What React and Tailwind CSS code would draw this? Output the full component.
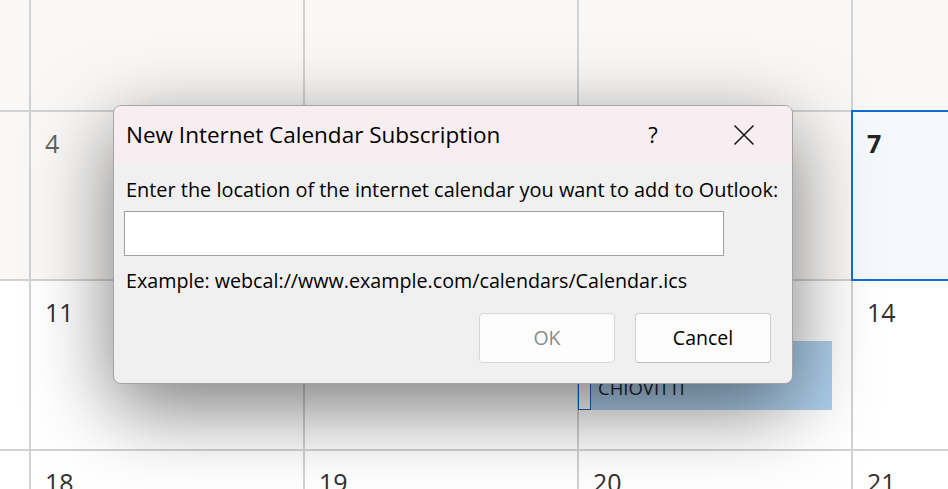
import React from "react";

const past = "bg-[#f9f8f7]";

function Day({ n, dim, bold }) {
  return (
    <div
      className={
        "pl-[14px] pt-[15px] text-[25px] leading-[32px] " +
        (bold ? "font-bold text-[#242424]" : dim ? "text-[#616161]" : "text-[#323130]")
      }
    >
      {n}
    </div>
  );
}

function CloseIcon() {
  return (
    <svg width="22" height="22" viewBox="0 0 22 22" fill="none">
      <path d="M1.5 1.5L20.5 20.5M20.5 1.5L1.5 20.5" stroke="#1a1a1a" strokeWidth="1.6" />
    </svg>
  );
}

export default function App() {
  return (
    <div className="relative w-[948px] h-[489px] overflow-hidden font-['Open_Sans',sans-serif]">
      {/* calendar month grid behind the dialog */}
      <div className="grid w-full h-full grid-cols-[29px_272px_272px_272px_1fr] grid-rows-[110px_167px_168px_1fr] gap-[2px] bg-[#d2d2d2]">
        {/* week 1 (scrolled) */}
        <div className={past} />
        <div className={past} />
        <div className={past} />
        <div className={past} />
        <div className={past} />

        {/* week 2 */}
        <div className={past} />
        <div className={past}><Day n="4" dim /></div>
        <div className={past} />
        <div className={past} />
        <div className="relative z-10 bg-[#f5f9fe] outline-2 outline-solid outline-[#0f6fd3]">
          <Day n="7" bold />
        </div>

        {/* week 3 */}
        <div className="bg-white" />
        <div className="bg-white"><Day n="11" /></div>
        <div className="bg-white" />
        <div className="bg-white">
          <div className="flex ml-[-1px] mt-[60px] w-[254px] h-[69px]">
            <div className="w-[13px] border border-[#1466c4] bg-white" />
            <div className="flex-1 bg-[#aecfec] pl-[7px] pt-[35px] text-[18.5px] leading-[24px] text-[#242424]">
              CHIOVITTI
            </div>
          </div>
        </div>
        <div className="bg-white"><Day n="14" /></div>

        {/* week 4 */}
        <div className="bg-white" />
        <div className="bg-white"><Day n="18" /></div>
        <div className="bg-white"><Day n="19" /></div>
        <div className="bg-white"><Day n="20" /></div>
        <div className="bg-white"><Day n="21" /></div>
      </div>

      {/* dialog window */}
      <div className="absolute left-[113px] top-[105px] z-20 w-[680px] rounded-[8px] border border-[#a3a3a3] bg-[#f0f0f0] overflow-hidden shadow-[0_24px_80px_rgba(0,0,0,0.52)]">
        <div className="flex items-center h-[57px] bg-[#f8eef1] pl-[12px] pr-[25px]">
          <span className="flex-1 text-[22.5px] text-black">New Internet Calendar Subscription</span>
          <span className="w-[46px] text-center text-[22px] text-black">?</span>
          <span className="w-[46px] ml-[45px] flex justify-center">
            <CloseIcon />
          </span>
        </div>
        <div className="px-[10px] pt-[15px] pb-[20px] text-black">
          <p className="pl-[2px] text-[19.9px] leading-[24px] whitespace-nowrap">
            Enter the location of the internet calendar you want to add to Outlook:
          </p>
          <input
            type="text"
            className="block mt-[9px] w-[600px] h-[45px] border border-[#a0a0a0] bg-white outline-none"
          />
          <p className="mt-[13px] pl-[2px] text-[19.7px] leading-[24px] whitespace-nowrap">
            Example: webcal://www.example.com/calendars/Calendar.ics
          </p>
          <div className="flex justify-end gap-[20px] mt-[20px] pr-[11px]">
            <button className="w-[136px] h-[50px] rounded-[4px] border border-[#d6d6d6] bg-[#fdfdfd] text-[19.5px] text-[#8a8a8a]">
              OK
            </button>
            <button className="w-[136px] h-[50px] rounded-[4px] border border-[#d0d0d0] border-b-[#bdbdbd] bg-[#fdfdfd] text-[19.5px] text-black">
              Cancel
            </button>
          </div>
        </div>
      </div>
    </div>
  );
}
